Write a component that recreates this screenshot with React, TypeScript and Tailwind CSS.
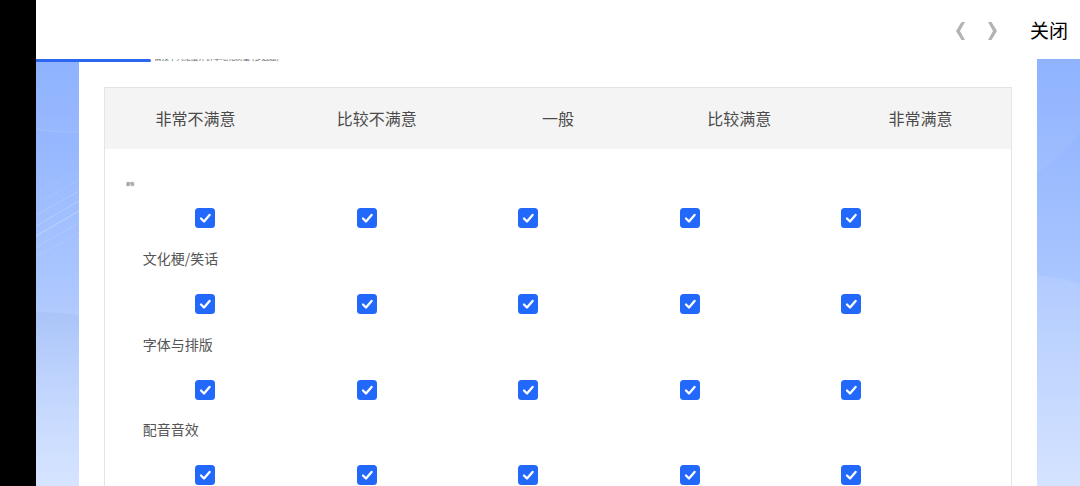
const columns = ["非常不满意", "比较不满意", "一般", "比较满意", "非常满意"];

const rows = ["文化梗/笑话", "字体与排版", "配音音效"];

function Checkbox() {
  return (
    <span className="flex h-5 w-5 items-center justify-center rounded-[3.5px] bg-[#2168fb]">
      <svg width="20" height="20" viewBox="0 0 20 20" fill="none">
        <path d="M6 10.5l3 3L14.6 6.9" stroke="#fff" strokeWidth="2.3" strokeLinecap="round" strokeLinejoin="round" />
      </svg>
    </span>
  );
}

function CheckboxRow() {
  return (
    <div className="grid w-[807px] grid-cols-5 justify-items-center">
      {columns.map((c) => (
        <Checkbox key={c} />
      ))}
    </div>
  );
}

function LeftBackdrop() {
  return (
    <svg width="43" height="427" viewBox="0 0 43 427" fill="none">
      <path d="M0 0H43V73Q18 74 0 70Z" fill="#fff" fillOpacity="0.04" />
      <path d="M0 70Q18 74 43 73" stroke="#fff" strokeOpacity="0.12" />
      <g stroke="#fff">
        <path d="M0 134L43 112" strokeOpacity="0.08" />
        <path d="M0 145L43 121" strokeOpacity="0.1" />
        <path d="M0 156L43 132" strokeOpacity="0.16" />
        <path d="M0 167L43 142" strokeOpacity="0.2" />
        <path d="M0 177L43 152" strokeOpacity="0.32" />
        <path d="M0 188L43 164" strokeOpacity="0.15" />
        <path d="M0 198L43 174" strokeOpacity="0.1" />
      </g>
      <path d="M0 253Q25 253 43 257V427H0Z" fill="url(#leftWave)" />
      <defs>
        <linearGradient id="leftWave" x1="0" y1="253" x2="0" y2="427" gradientUnits="userSpaceOnUse">
          <stop stopColor="#7f9fd8" stopOpacity="0.15" />
          <stop offset="1" stopColor="#fff" stopOpacity="0" />
        </linearGradient>
      </defs>
    </svg>
  );
}

function RightBackdrop() {
  return (
    <svg width="43" height="427" viewBox="0 0 43 427" fill="none">
      <path d="M0 0H43V73Q25 99 0 114Z" fill="#fff" fillOpacity="0.05" />
      <path d="M0 216Q22 218 43 225V427H0Z" fill="#fff" fillOpacity="0.1" />
    </svg>
  );
}

export default function App() {
  return (
    <div className="flex h-[486px] w-[1080px] overflow-hidden bg-white font-['Noto_Sans_CJK_SC',sans-serif]">
      <div className="w-9 shrink-0 bg-black" />

      <div className="flex min-w-0 flex-1 flex-col">
        {/* Toolbar */}
        <header className="flex h-[59px] shrink-0 items-center justify-end pt-px pr-3">
          <svg className="mt-[2px] mr-5" width="12" height="20" viewBox="0 0 12 20" fill="#b3b3b3">
            <path d="M6.5 1H10L5 10L10 19H6.5L1 10Z" />
          </svg>
          <svg className="mt-[2px] mr-[31px]" width="12" height="20" viewBox="0 0 12 20" fill="#b3b3b3">
            <path d="M4.5 1H1L6 10L1 19H4.5L10 10Z" />
          </svg>
          <button className="text-[19px] leading-7 text-black">关闭</button>
        </header>

        <div className="relative flex min-h-0 flex-1">
          {/* Progress */}
          <div className="absolute top-0 left-0 h-[3px] w-[114.5px] rounded-r-full bg-[#2c68ef]" />

          <aside className="w-[43px] shrink-0 bg-linear-to-b from-[#8aafff] via-[#a9c5ff] to-[#d6e4ff]">
            <LeftBackdrop />
          </aside>

          <main className="min-w-0 flex-1 overflow-hidden px-[25px]">
            <div className="h-7 overflow-hidden">
              <p className="-mt-2 pl-[50px] text-[7.4px] leading-[11px] whitespace-nowrap text-[#666]">
                请按下列维度评价本地化质量 (多选题)
              </p>
            </div>

            <div className="h-[460px] border border-[#e4e4e4]">
              <div className="grid h-[61px] grid-cols-5 items-center bg-[#f4f4f4] pb-px text-center text-base text-[#4a4a4a]">
                {columns.map((c) => (
                  <span key={c}>{c}</span>
                ))}
              </div>

              <div className="pt-6 pl-[19.8px]">
                <section className="h-[75px]">
                  <div className="mb-[13.5px] flex h-[21px] items-center pl-[1.5px] text-[4px] leading-none font-bold text-[#888]">
                    剧情
                  </div>
                  <CheckboxRow />
                </section>

                {rows.map((label) => (
                  <section key={label} className="h-[85.6px]">
                    <div className="mb-[25px] h-[21px] pl-[18px] text-[14px] leading-[21px] text-[#555]">{label}</div>
                    <CheckboxRow />
                  </section>
                ))}
              </div>
            </div>
          </main>

          <aside className="w-[43px] shrink-0 bg-linear-to-b from-[#8aafff] via-[#a9c5ff] to-[#d0e0ff]">
            <RightBackdrop />
          </aside>
        </div>
      </div>
    </div>
  );
}
